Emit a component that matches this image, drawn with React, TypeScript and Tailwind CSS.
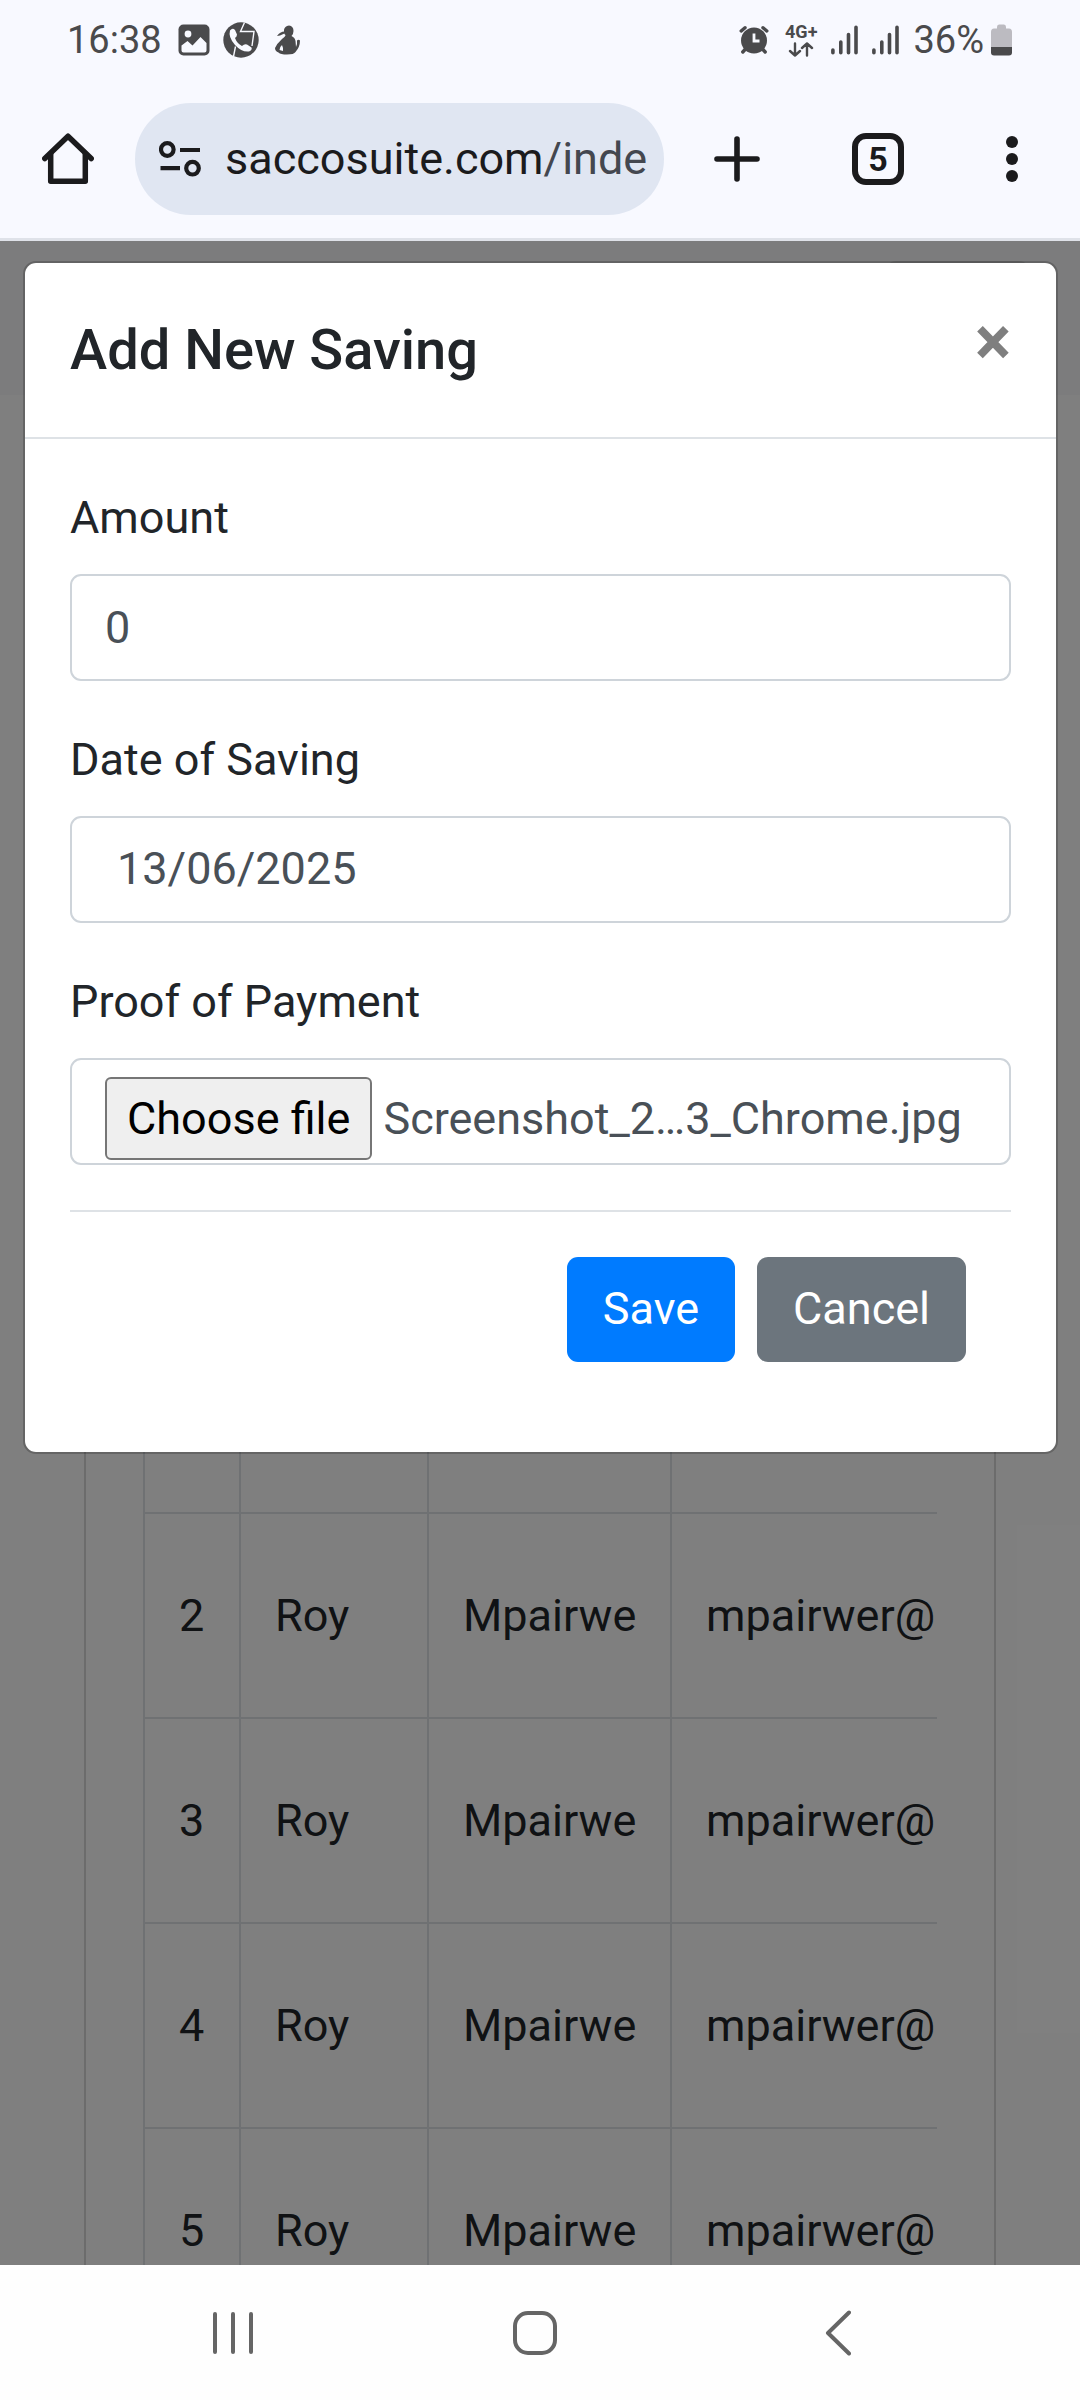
import React, { useState } from "react";

const savings = [
  { id: 2, first: "Roy", last: "Mpairwe", email: "mpairwer@" },
  { id: 3, first: "Roy", last: "Mpairwe", email: "mpairwer@" },
  { id: 4, first: "Roy", last: "Mpairwe", email: "mpairwer@" },
  { id: 5, first: "Roy", last: "Mpairwe", email: "mpairwer@" },
];

function SignalBars() {
  return (
    <svg width="27" height="30" viewBox="0 0 27 30" stroke="#4a4a4c" strokeWidth="3.6" strokeLinecap="round" aria-hidden="true">
      <path d="M1.9 25v2.8M9.8 17v10.8M17.5 9.5v18.3M25 2.2v25.6" />
    </svg>
  );
}

function StatusBar() {
  return (
    <div className="flex h-20 items-center justify-between pl-[67px] pr-[68px] text-[38px] leading-[44px] text-[#4a4a4c]">
      <div className="flex items-center">
        <span className="mr-4">16:38</span>
        <svg className="mr-[13px]" width="32" height="32" viewBox="0 0 32 32" aria-hidden="true">
          <rect x="0.5" y="0.5" width="31" height="31" rx="5" fill="#4a4a4c" />
          <circle cx="10" cy="10" r="3.4" fill="#f8f9ff" />
          <path d="M3.5 21.5 9.5 17 14.5 21.5 22.5 13 28.500 19V26.5Q28.500 28.500 26.500 28.500H5.500Q3.500 28.500 3.500 26.500Z" fill="#f8f9ff" />
        </svg>
        <svg className="mr-[15px]" width="36" height="36" viewBox="0 0 36 36" aria-hidden="true">
          <circle cx="18" cy="18" r="17.7" fill="#4a4a4c" />
          <path d="M21.5 0.5 17.5 9.5H31L29 24M12.500 24.500 10.500 34.500" fill="none" stroke="#f8f9ff" strokeWidth="1.4" />
          <path d="M7 8.500Q9.500 5.500 12 8L14 12.500Q14 14.500 12 16Q14 21.500 19 24Q21.500 21.500 24 22.500L28.500 25.500Q29.500 28 26 29.500Q19 30.500 12 23Q5 15 7 8.500Z" fill="#f8f9ff" />
        </svg>
        <svg width="27" height="32" viewBox="0 0 27 32" aria-hidden="true">
          <g fill="#4a4a4c">
            <path d="M10 6Q10.500 2 15 1.500Q19.500 2 19.500 7Q19.500 10 17.500 12Q21 13.500 21.500 17L22 23Q23.500 20 23 16.500Q24.500 15 26 16.500Q26 23 21.500 28Q20 30.500 13 30.500Q6.500 30.500 4.500 28.500Q1 27 1 24Q3 19.500 8 15Q11.500 12.500 11.500 11Q10 10 10 8.500Z" />
            <path d="M10.500 7.500Q6 7.500 3 12L6 11.500L10.500 9.500Z" />
          </g>
          <path d="M8 21Q5.500 23 5.500 26L9 27Q9.500 24 8 21Z" fill="#f8f9ff" />
        </svg>
      </div>
      <div className="flex items-center">
        <svg className="mr-4" width="30" height="30" viewBox="0 0 30 30" aria-hidden="true">
          <g stroke="#4a4a4c" strokeWidth="3.4" strokeLinecap="round">
            <path d="M2.200 6 6 2.700M27.800 6 24 2.700M6.500 24 3.800 27M23.500 24l2.700 3" />
          </g>
          <circle cx="15" cy="15.500" r="13" fill="#4a4a4c" />
          <path d="M15 8.500v7.500h5.500" fill="none" stroke="#f8f9ff" strokeWidth="2.8" />
        </svg>
        <div className="mr-[14px] flex flex-col items-center gap-[2px]">
          <span className="text-[18px] font-bold leading-[16px]">4G+</span>
          <svg width="26" height="15" viewBox="0 0 26 15" fill="none" stroke="#4a4a4c" strokeWidth="2.4" strokeLinecap="round" strokeLinejoin="round" aria-hidden="true">
            <path d="M7 1.500v12M2 9l5 4.500L12 9M19 13.500v-12M14 6l5-4.500L24 6" />
          </svg>
        </div>
        <div className="mr-[14px] flex gap-[14px]">
          <SignalBars />
          <SignalBars />
        </div>
        <span className="mr-[7px]">36%</span>
        <svg width="21" height="32" viewBox="0 0 21 32" aria-hidden="true">
          <path d="M6 3Q6 0.500 8 0.500H13Q15 0.500 15 3V4.500H18Q21 4.500 21 8V23H0V8Q0 4.500 3 4.500H6Z" fill="#bcbbc1" />
          <path d="M0 23H21V28.500Q21 31.500 18 31.500H3Q0 31.500 0 28.500Z" fill="#4a4a4c" />
        </svg>
      </div>
    </div>
  );
}

function BrowserToolbar() {
  return (
    <div className="flex h-[158px] items-center text-[#1b1b1d]">
      <button aria-label="Home" className="flex w-[135px] justify-center">
        <svg width="52" height="52" viewBox="0 0 52 52" fill="none" stroke="currentColor" strokeWidth="5.5" strokeLinecap="round" strokeLinejoin="round" aria-hidden="true">
          <path d="M2.800 25.500 26 3.200 49.200 25.500" />
          <path d="M8.700 21v27.300h34.600V21" />
        </svg>
      </button>
      <div className="flex h-[112px] min-w-0 flex-1 items-center rounded-full bg-[#e0e6f2] pl-6 pr-3">
        <button aria-label="Site information" className="mr-6 shrink-0">
          <svg width="42" height="36" viewBox="0 0 42 36" fill="none" stroke="currentColor" strokeWidth="4.2" aria-hidden="true">
            <circle cx="8.300" cy="8.500" r="6.300" />
            <path d="M21 9h20M1.500 27.200h19.500" />
            <circle cx="33.500" cy="27.200" r="6.300" />
          </svg>
        </button>
        <a href="#address" className="whitespace-nowrap text-[45px] leading-[60px]">
          saccosuite.com<span className="text-[#44474f]">/inde</span>
        </a>
      </div>
      <button aria-label="New tab" className="flex w-[146px] justify-center">
        <svg width="46" height="46" viewBox="0 0 46 46" stroke="currentColor" strokeWidth="5.6" strokeLinecap="round" aria-hidden="true">
          <path d="M23 3v40M3 23h40" />
        </svg>
      </button>
      <button aria-label="Open tabs" className="flex w-[136px] justify-center">
        <span className="flex h-[52px] w-[52px] items-center justify-center rounded-[14px] border-[6px] border-current text-[34px] font-bold leading-[40px]">
          5
        </span>
      </button>
      <button aria-label="More options" className="flex w-[134px] justify-center pr-[2px]">
        <svg width="12" height="46" viewBox="0 0 12 46" fill="currentColor" aria-hidden="true">
          <circle cx="6" cy="6" r="6" />
          <circle cx="6" cy="23" r="6" />
          <circle cx="6" cy="40" r="6" />
        </svg>
      </button>
    </div>
  );
}

function SavingsPage() {
  return (
    <div className="h-full overflow-hidden bg-white">
      <div className="flex h-[154px] items-start justify-end bg-[#f8f9fa] pr-[50px] pt-5">
        <button aria-label="Menu" className="h-[112px] w-[145px] rounded-[11px] border-2 border-black/10" />
      </div>
      <div className="mx-[84px] border-x-2 border-black/15 px-[57px]">
        <div className="overflow-hidden">
          <table className="w-full border-collapse border-l-2 border-[#dee2e6] text-left">
            <colgroup>
              <col className="w-[96px]" />
              <col className="w-[188px]" />
              <col className="w-[243px]" />
              <col />
            </colgroup>
            <tbody>
              <tr className="h-[1118px]">
                <td className="border-2 border-t-0 border-[#dee2e6]" />
                <td className="border-2 border-t-0 border-[#dee2e6]" />
                <td className="border-2 border-t-0 border-[#dee2e6]" />
                <td className="border-b-2 border-[#dee2e6]" />
              </tr>
              {savings.map((row) => (
                <tr key={row.id} className="h-[205px]">
                  <td className="border-2 border-[#dee2e6] pl-[34px]">{row.id}</td>
                  <td className="border-2 border-[#dee2e6] pl-[34px]">{row.first}</td>
                  <td className="border-2 border-[#dee2e6] pl-[34px]">{row.last}</td>
                  <td className="whitespace-nowrap border-b-2 border-[#dee2e6] pl-[34px]">{row.email}</td>
                </tr>
              ))}
            </tbody>
          </table>
        </div>
      </div>
    </div>
  );
}

function SavingModal() {
  const [amount, setAmount] = useState("0");
  const [date, setDate] = useState("13/06/2025");
  const [fileName, setFileName] = useState("Screenshot_2…3_Chrome.jpg");

  return (
    <section
      role="dialog"
      aria-labelledby="modal-title"
      className="rounded-[13px] border-2 border-black/20 bg-white bg-clip-padding"
    >
      <header className="flex items-start justify-between border-b-2 border-[#dee2e6] p-[45px]">
        <h5 id="modal-title" className="text-[56px] font-medium leading-[84px]">
          Add New Saving
        </h5>
        <button aria-label="Close" className="text-[68px] font-bold leading-[68px] text-[#7f7f7f]">
          ×
        </button>
      </header>
      <form className="p-[45px]" onSubmit={(e) => e.preventDefault()}>
        <div className="mb-[45px]">
          <label htmlFor="amount" className="mb-[23px] block">
            Amount
          </label>
          <input
            id="amount"
            type="number"
            value={amount}
            onChange={(e) => setAmount(e.target.value)}
            className="block h-[107px] w-full rounded-[11px] border-2 border-[#ced4da] px-[33px] text-[#495057]"
          />
        </div>
        <div className="mb-[45px]">
          <label htmlFor="date" className="mb-[23px] block">
            Date of Saving
          </label>
          <input
            id="date"
            type="text"
            inputMode="numeric"
            value={date}
            onChange={(e) => setDate(e.target.value)}
            className="block h-[107px] w-full rounded-[11px] border-2 border-[#ced4da] px-[45px] pb-[2px] text-[#495057]"
          />
        </div>
        <div className="mb-[45px]">
          <label htmlFor="proof" className="mb-[23px] block">
            Proof of Payment
          </label>
          <div className="relative flex h-[107px] items-start rounded-[11px] border-2 border-[#ced4da] px-[33px] pt-[17px] text-[#495057]">
            <span className="mr-[11px] flex h-[83px] shrink-0 items-center rounded-[6px] border-2 border-[#767676] bg-[#efefef] px-5 text-black">
              Choose file
            </span>
            <span className="truncate leading-[83px]">{fileName}</span>
            <input
              id="proof"
              type="file"
              onChange={(e) => setFileName(e.target.files?.[0]?.name ?? "")}
              className="absolute inset-0 cursor-pointer opacity-0"
            />
          </div>
        </div>
        <footer className="flex justify-end gap-[22px] border-t-2 border-[#dee2e6] p-[45px]">
          <button type="submit" className="rounded-[11px] bg-[#007bff] px-[36px] pb-5 pt-[18px] text-white">
            Save
          </button>
          <button type="button" className="rounded-[11px] bg-[#6c757d] px-[36px] pb-5 pt-[18px] text-white">
            Cancel
          </button>
        </footer>
      </form>
    </section>
  );
}

function NavigationBar() {
  return (
    <nav className="grid h-[135px] shrink-0 grid-cols-3 items-center bg-[#fefefe] pl-[82px] pr-[91px] text-[#656565]">
      <button aria-label="Recent apps" className="flex justify-center">
        <svg width="42" height="44" viewBox="0 0 42 44" stroke="currentColor" strokeWidth="4" strokeLinecap="round" aria-hidden="true">
          <path d="M3 3v38M21 3v38M39 3v38" />
        </svg>
      </button>
      <button aria-label="Home screen" className="flex justify-center">
        <svg width="44" height="44" viewBox="0 0 44 44" fill="none" stroke="currentColor" strokeWidth="4" aria-hidden="true">
          <rect x="2" y="2" width="40" height="40" rx="13" />
        </svg>
      </button>
      <button aria-label="Back" className="flex justify-center">
        <svg width="26" height="46" viewBox="0 0 26 46" fill="none" stroke="currentColor" strokeWidth="4" strokeLinecap="round" strokeLinejoin="round" aria-hidden="true">
          <path d="M24 2.500 3 23 24 43.500" />
        </svg>
      </button>
    </nav>
  );
}

export default function App() {
  return (
    <div className="flex h-screen flex-col overflow-hidden bg-white font-[Roboto,sans-serif] text-[45px] leading-[67px] text-[#212529]">
      <div className="shrink-0 border-b-[3px] border-[#dfe2e9] bg-[#f8f9ff]">
        <StatusBar />
        <BrowserToolbar />
      </div>
      <main className="relative min-h-0 flex-1">
        <SavingsPage />
        <div className="absolute inset-0 bg-black/50 pl-[23px] pr-[22px] pt-5">
          <SavingModal />
        </div>
      </main>
      <NavigationBar />
    </div>
  );
}
